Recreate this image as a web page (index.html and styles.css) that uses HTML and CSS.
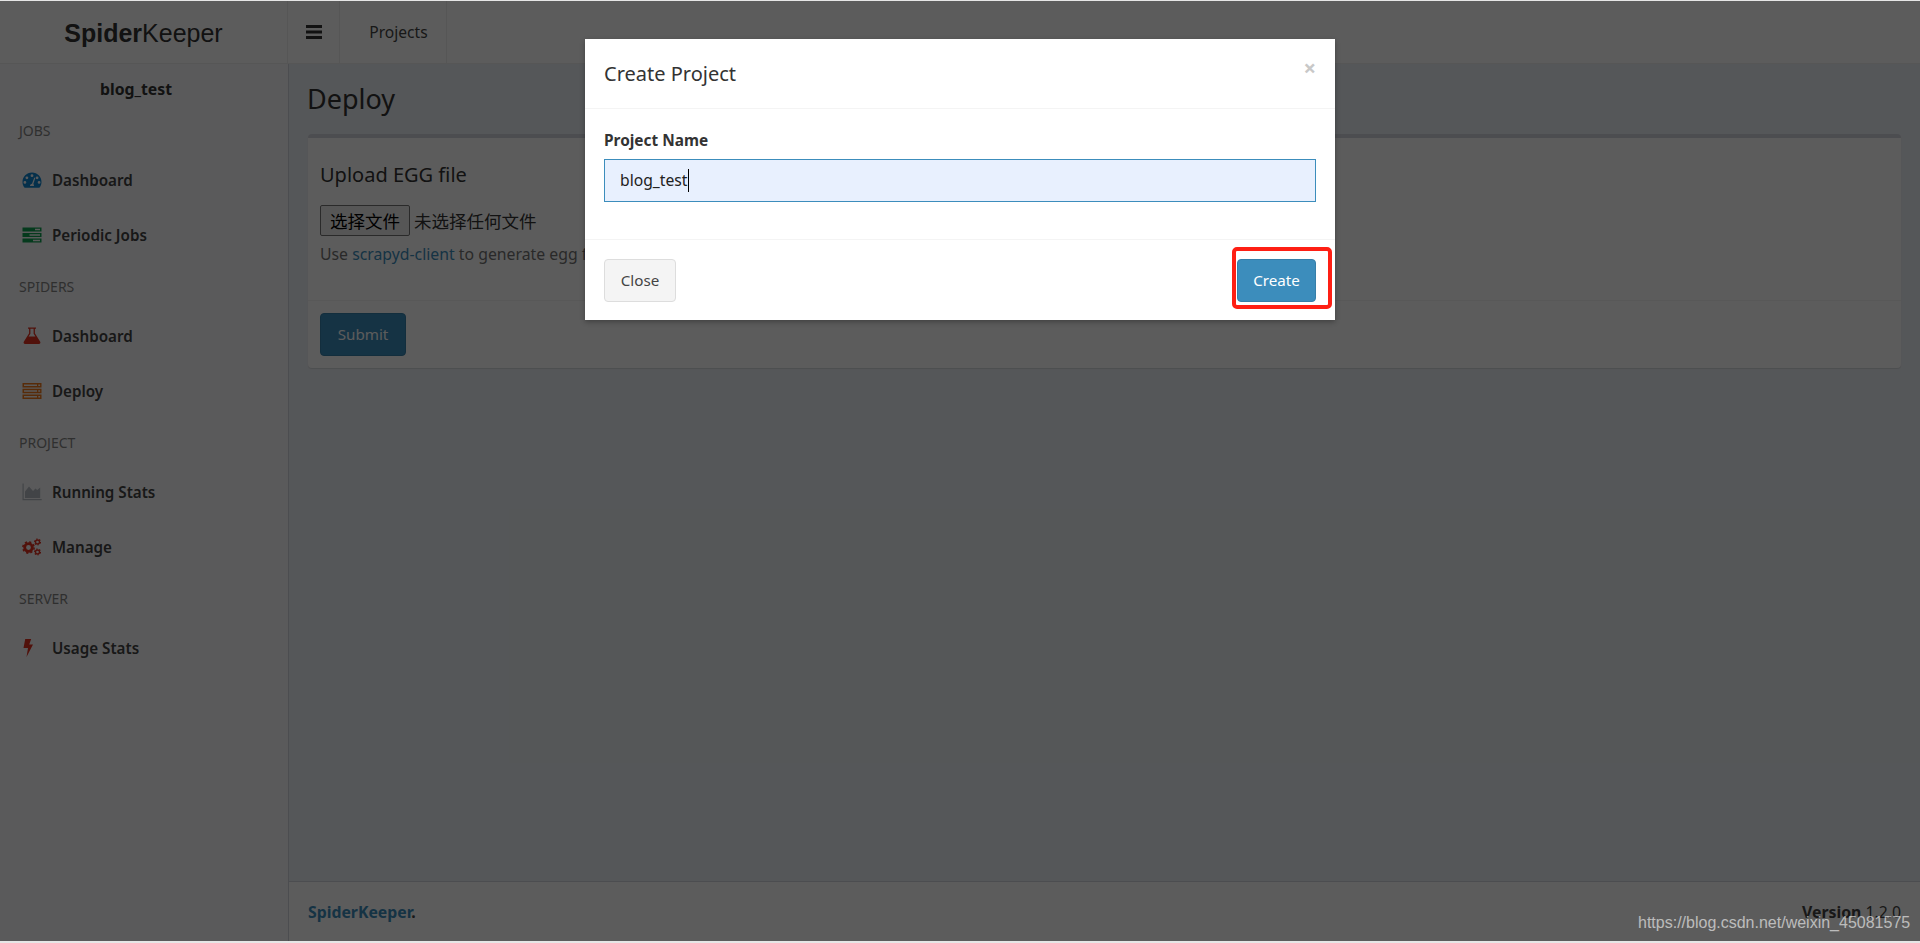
FILE: index.html
```html
<!DOCTYPE html>
<html lang="en">
<head>
    <meta charset="UTF-8">
    <title>SpiderKeeper</title>
    <link rel="stylesheet" href="styles.css">
</head>
<body>
    <div class="app">
        <header class="topbar">
            <div class="logo"><b>Spider</b>Keeper</div>
            <a class="toggle">
                <svg width="16" height="14" viewBox="0 0 16 14"><path d="M0 0h16v3H0zM0 5.5h16v3H0zM0 11h16v3H0z" fill="#333"/></svg>
            </a>
            <a class="top-link">Projects</a>
        </header>

        <aside class="sidebar">
            <div class="project-name">blog_test</div>
            <ul class="menu">
                <li class="menu-head">JOBS</li>
                <li class="menu-item">
                    <svg class="icon" viewBox="0 0 20 18"><path fill-rule="evenodd" fill="#0f86d0" d="M10 1.5C4.5 1.5 0.5 5.8 0.5 11c0 2 .6 3.8 1.6 5.3.2.3.5.4.8.4h14.200c.3 0 .6-.1.8-.4 1-1.500 1.600-3.300 1.600-5.300 0-5.200-4-9.500-9.500-9.500zM10 3.300a1.400 1.400 0 1 1 0 2.800 1.400 1.400 0 0 1 0-2.800zM4.900 5.400a1.400 1.400 0 1 1 0 2.800 1.400 1.400 0 0 1 0-2.800zM15.100 5.400a1.400 1.400 0 1 1 0 2.800 1.400 1.400 0 0 1 0-2.800zM2.900 10a1.400 1.400 0 1 1 0 2.800 1.400 1.400 0 0 1 0-2.800zM17.100 10a1.400 1.400 0 1 1 0 2.800 1.400 1.400 0 0 1 0-2.800zM12.300 6.500l1 .4-2 6.200c.5.500.8 1.100.7 1.800H8c0-1.100.9-2 2-2.100z"/></svg>
                    Dashboard
                </li>
                <li class="menu-item">
                    <svg class="icon" viewBox="0 0 20 18"><path fill-rule="evenodd" fill="#10a050" d="M0.500 1.500h19v4h-19zM13 2.700v1.600h5V2.700zM0.500 7h19v4h-19zM7.500 8.200v1.600h10.500V8.200zM0.500 12.500h19v4h-19zM11 13.700v1.600h7v-1.600z"/></svg>
                    Periodic Jobs
                </li>
                <li class="menu-head">SPIDERS</li>
                <li class="menu-item">
                    <svg class="icon" viewBox="0 0 20 18"><path fill-rule="evenodd" fill="#e03020" d="M6 0.500h8v1.300h-1.100v4.500l5.300 8.500c.6 1-.1 2.200-1.200 2.200H3c-1.100 0-1.800-1.200-1.200-2.200l5.300-8.500V1.800H6zM8.400 1.800v4.900l-1.800 2.900h6.800l-1.800-2.900V1.800z"/></svg>
                    Dashboard
                </li>
                <li class="menu-item">
                    <svg class="icon" viewBox="0 0 20 18"><path fill-rule="evenodd" fill="#f0781a" d="M0.500 1h19v4.400h-19zM2 2.400v1.600h13V2.400zM16.300 2.400v1.600h1.800V2.400zM0.500 6.800h19v4.400h-19zM2 8.200v1.600h13V8.200zM16.300 8.200v1.600h1.800V8.200zM0.500 12.600h19v4.400h-19zM2 14v1.600h13V14zM16.300 14v1.600h1.800V14z"/></svg>
                    Deploy
                </li>
                <li class="menu-head">PROJECT</li>
                <li class="menu-item">
                    <svg class="icon" viewBox="0 0 20 18"><path fill="#b8bcc4" d="M0.500 0.500h1.200v15.600h18v1.200H0.500z"/><path fill="#b8bcc4" d="M3 15V8.500L7 3.500l4 4.500 2.500-2.500 1.700 1.500 3 -2.500V15z"/></svg>
                    Running Stats
                </li>
                <li class="menu-item">
                    <svg class="icon" viewBox="0 0 20 18">
                        <circle cx="6.500" cy="9.500" r="3.800" fill="none" stroke="#e03020" stroke-width="2.800"/>
                        <circle cx="6.500" cy="9.500" r="5.600" fill="none" stroke="#e03020" stroke-width="1.600" stroke-dasharray="2.200 2.200"/>
                        <circle cx="15.500" cy="4" r="2" fill="none" stroke="#e03020" stroke-width="1.400"/>
                        <circle cx="15.500" cy="4" r="3" fill="none" stroke="#e03020" stroke-width="1.100" stroke-dasharray="1.500 1.600"/>
                        <circle cx="15.500" cy="14" r="2" fill="none" stroke="#e03020" stroke-width="1.400"/>
                        <circle cx="15.500" cy="14" r="3" fill="none" stroke="#e03020" stroke-width="1.100" stroke-dasharray="1.500 1.600"/>
                    </svg>
                    Manage
                </li>
                <li class="menu-head">SERVER</li>
                <li class="menu-item">
                    <svg class="icon" viewBox="0 0 20 18"><path fill="#e03020" d="M3.200 0h6l-2 5.500h3.800L4.500 18 6 9H1.500z"/></svg>
                    Usage Stats
                </li>
            </ul>
        </aside>

        <main class="content">
            <h1 class="page-title">Deploy</h1>
            <section class="box">
                <div class="box-body">
                    <h3 class="box-title">Upload EGG file</h3>
                    <div class="file-row">
                        <button class="file-btn" type="button">选择文件</button>
                        <span class="file-name">未选择任何文件</span>
                    </div>
                    <p class="help">Use <a class="link">scrapyd-client</a> to generate egg file.</p>
                </div>
                <div class="box-footer">
                    <button class="btn btn-primary" type="button">Submit</button>
                </div>
            </section>
        </main>

        <footer class="footer">
            <div><b class="link">SpiderKeeper</b><b>.</b></div>
            <div><b>Version</b> 1.2.0</div>
        </footer>

        <div class="backdrop">
            <div class="modal">
                <div class="modal-head">
                    <h4 class="modal-title">Create Project</h4>
                    <span class="modal-x">×</span>
                </div>
                <div class="modal-body">
                    <label class="field-label">Project Name</label>
                    <div class="field"><span class="field-text">blog_test</span></div>
                </div>
                <div class="modal-foot">
                    <button class="btn btn-default" type="button">Close</button>
                    <div class="marked">
                        <button class="btn btn-primary" type="button">Create</button>
                        <span class="red-mark"></span>
                    </div>
                </div>
            </div>
        </div>
    </div>

    <div class="watermark">https://blog.csdn.net/weixin_45081575</div>
</body>
</html>
```

FILE: styles.css
```css
*{
    margin:0;
    padding:0;
    box-sizing:border-box;
}

body{
    height:943px;
    overflow:hidden;
    background-color:#e6e6e6;
    padding-top:1px;
    font-family:"Noto Sans","Noto Sans CJK SC",sans-serif;
    font-size:15.2px;
    color:#333;
}

.app{
    position:relative;
    height:940px;
    display:grid;
    grid-template-columns:289px 1fr;
    grid-template-rows:63px 1fr 60px;
    background-color:#ecf0f5;
}

.topbar{
    grid-column:1 / 3;
    display:flex;
    background-color:#fff;
    border-bottom:1px solid #eee;
}
.logo{
    width:288px;
    text-align:center;
    font-family:"Liberation Sans",Arial,sans-serif;
    font-size:25px;
    line-height:64px;
    border-right:1px solid #eee;
    color:#333;
}
.toggle{
    width:52px;
    display:flex;
    align-items:center;
    justify-content:center;
    border-right:1px solid #eee;
}
.top-link{
    width:107px;
    padding-left:11px;
    text-align:center;
    font-size:15.6px;
    line-height:62px;
    color:#444;
    border-right:1px solid #eee;
}

.sidebar{
    grid-row:2 / 4;
    background-color:#f9fafc;
    border-right:1px solid #d2d6de;
}
.project-name{
    height:42px;
    padding:13px 16px 0 0;
    text-align:center;
    font-size:15.8px;
    font-weight:700;
    line-height:25px;
    color:#333;
}
.menu{
    list-style:none;
}
.menu-head{
    height:46px;
    padding:12px 19px 9px;
    line-height:25px;
    font-size:14px;
    color:#848484;
}
.menu-item{
    height:55px;
    display:flex;
    align-items:center;
    gap:10px;
    padding-left:22px;
    font-weight:600;
    color:#444;
}
.icon{
    width:20px;
    height:18px;
    flex:none;
}

.content{
    padding:0 19px;
}
.page-title{
    font-size:27px;
    font-weight:400;
    line-height:36px;
    margin:17px 0 17px -1px;
    color:#333;
}
.box{
    background-color:#fff;
    border-top:4px solid #d2d6de;
    border-radius:4px;
    box-shadow:0 1px 1px rgba(0,0,0,.1);
    height:234px;
    display:flex;
    flex-direction:column;
}
.box-body{
    height:162px;
    padding:0 12px;
}
.box-title{
    font-size:20px;
    font-weight:400;
    line-height:28px;
    padding-top:23px;
    height:67px;
    color:#333;
}
.file-row{
    display:flex;
    align-items:center;
    gap:4px;
    font-size:17.500px;
    height:30px;
}
.file-btn{
    width:90px;
    height:31px;
    font-family:inherit;
    font-size:17.500px;
    background-color:#efefef;
    border:1px solid #767676;
    border-radius:2px;
    color:#000;
}
.help{
    margin-top:7px;
    font-size:15.8px;
    line-height:24px;
    color:#737373;
}
.link{
    color:#3c8dbc;
}
.box-footer{
    border-top:1px solid #f4f4f4;
    padding:12px;
}

.btn{
    height:43px;
    padding-bottom:2px;
    font-family:inherit;
    font-size:15.200px;
    border-radius:4px;
    border:1px solid transparent;
}
.btn-primary{
    background-color:#3c8dbc;
    border-color:#367fa9;
    color:#fff;
}
.btn-default{
    background-color:#f4f4f4;
    border-color:#ddd;
    color:#444;
    width:72px;
}
.box-footer .btn{
    width:86px;
}

.footer{
    display:flex;
    justify-content:space-between;
    align-items:center;
    padding:0 19px;
    font-size:15.8px;
    background-color:#fff;
    border-top:1px solid #d2d6de;
    color:#444;
}

.backdrop{
    position:absolute;
    top:0;
    right:0;
    bottom:0;
    left:0;
    display:flex;
    justify-content:center;
    align-items:flex-start;
    padding-top:38px;
    background-color:rgba(0,0,0,.64);
}
.modal{
    width:750px;
    background-color:#fff;
    box-shadow:0 2px 5px rgba(0,0,0,.3);
}
.modal-head{
    position:relative;
    height:70px;
    padding:0 19px;
    display:flex;
    align-items:center;
    border-bottom:1px solid #f4f4f4;
}
.modal-title{
    font-size:20px;
    font-weight:400;
    color:#333;
}
.modal-x{
    position:absolute;
    top:13px;
    right:19px;
    font-size:22px;
    font-weight:700;
    line-height:30px;
    color:#c8c8c8;
}
.modal-body{
    height:130px;
    padding:19px 19px 0;
}
.field-label{
    display:block;
    font-size:15.4px;
    font-weight:700;
    line-height:25px;
    margin-bottom:6px;
    color:#333;
}
.field{
    height:43px;
    padding-left:15px;
    display:flex;
    align-items:center;
    font-size:15.7px;
    background-color:#e8f0fe;
    border:1px solid #3c8dbc;
    color:#222;
}
.field-text{
    line-height:23px;
    margin-right:-1px;
    border-right:1px solid #000;
}
.modal-foot{
    height:81px;
    padding:19px 19px 0;
    display:flex;
    justify-content:space-between;
    align-items:flex-start;
    border-top:1px solid #f4f4f4;
}
.marked{
    position:relative;
    width:79px;
}
.marked .btn{
    width:79px;
}
.red-mark{
    position:absolute;
    top:-12px;
    left:-5px;
    right:-16px;
    bottom:-7px;
    border:4px solid #fe1f14;
    border-radius:5px;
}

.watermark{
    position:absolute;
    left:1638px;
    top:913px;
    font-family:"Liberation Sans",Arial,sans-serif;
    font-size:16px;
    line-height:20px;
    color:rgba(255,255,255,.6);
}
```
